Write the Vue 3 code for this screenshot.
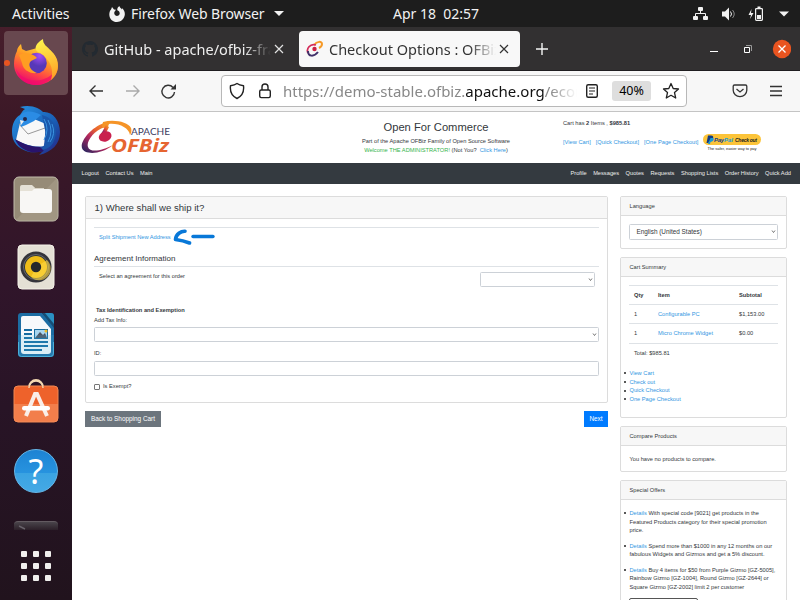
<script setup>
const leftNav = ['Logout', 'Contact Us', 'Main']
const rightNav = ['Profile', 'Messages', 'Quotes', 'Requests', 'Shopping Lists', 'Order History', 'Quick Add']
const cart = [
  { qty: 1, item: 'Configurable PC', sub: '$1,153.00' },
  { qty: 1, item: 'Micro Chrome Widget', sub: '$0.00' },
]
const cartLinks = ['View Cart', 'Check out', 'Quick Checkout', 'One Page Checkout']
const offers = [
  ['With special code [9021] get products in the', 'Featured Products category for their special promotion', 'price.'],
  ['Spend more than $1000 in any 12 months on our', 'fabulous Widgets and Gizmos and get a 5% discount.'],
  ['Buy 4 items for $50 from Purple Gizmo [GZ-5005],', 'Rainbow Gizmo [GZ-1004], Round Gizmo [GZ-2644] or', 'Square Gizmo [GZ-2002] limit 2 per customer'],
]
</script>

<template>
  <div class="screen">
    <header class="topbar">
      <span class="act">Activities</span>
      <svg class="fx" width="16" height="16" viewBox="0 0 16 16"><path fill="#f2f2f2" d="M2.2 3.2 3 1l2 2.4 2 .3-1.3 1.8C5 6.400 5 8 6.200 9.300c1.400 1.200 3.600.7 4.300-1C11.200 6.400 10 4.800 8.300 4.300 8 2.300 9 1 10.400.1c.2 1.700 1.500 2.200 2.600 3.300.1-.4 0-.9-.2-1.300C15.400 4 16.300 7 15.600 9.800 14.700 13.400 11.600 16 8 16 3.600 16 .3 12.600.3 8.400c0-2 .7-3.800 1.900-5.200z"/></svg>
      <span class="app-name">Firefox Web Browser</span>
      <i class="tri"></i>
      <span class="clock">Apr 18&nbsp; 02:57</span>
      <span class="tray">
        <svg width="100" height="18" viewBox="0 0 100 18"><g fill="#f2f2f2"><rect x="5" y="2" width="5" height="4" rx="1"/><rect x="0" y="11" width="5" height="4" rx="1"/><rect x="10" y="11" width="5" height="4" rx="1"/><path d="M29 6.500h3l4-4v13l-4-4h-3z"/><path d="m58.500 4-3 6H58l-1 4 3.500-6H58z"/><path d="M86 6.500h10l-5 5z"/></g><g fill="none" stroke="#f2f2f2"><path d="M7.500 6v3M2.500 11V8.500h10V11" stroke-width="1"/><path d="M37.500 6.500q2 2.500 0 5"/><path d="M39.500 5q3.500 4 0 8" opacity=".5"/><rect x="62.600" y="3.600" width="6.800" height="11.800" rx=".8" stroke-width="1.200"/></g><path fill="#f2f2f2" d="M64 10h4v4h-4zM64.500 1.500h3V3h-3z"/></svg>
      </span>
    </header>

    <div class="desktop">
      <aside class="dock">
        <div class="dock-active">
          <svg width="46" height="48" viewBox="0 0 46 48">
            <defs>
              <linearGradient id="ff" x1=".75" y1="0" x2=".3" y2="1"><stop stop-color="#fff044"/><stop offset=".38" stop-color="#ff9d25"/><stop offset=".7" stop-color="#ff4545"/><stop offset="1" stop-color="#e40079"/></linearGradient>
              <radialGradient id="globe" cx=".65" cy=".15"><stop stop-color="#a64df5"/><stop offset="1" stop-color="#5738b8"/></radialGradient>
              <linearGradient id="tail" x1=".5" y1="0" x2=".7" y2="1"><stop stop-color="#fff24b"/><stop offset="1" stop-color="#ff9d25"/></linearGradient>
            </defs>
            <path fill="url(#ff)" d="M4 13c0-3 2-5 4-7l1 5 4 2 4-1 7-2 13 2c6 5 8 10 8 16 0 11-10 19-22 19S1 38 1 26c0-5 1-9 3-13z"/>
            <path fill="#f40a6c" opacity=".7" d="M3 31c5 10 17 14 28 10 6-2 10-6 13-10-2 9-11 16-21 16C13 47 5 40 3 31z"/>
            <path fill="url(#tail)" d="M30 1c0 6 4 7 8 12 9 9 9 22 0 29 3-10 0-20-11-27-8-3-4-10 3-14z"/>
            <circle cx="23.500" cy="25" r="10.300" fill="url(#globe)"/>
            <path fill="#ff9e22" d="M6 17c5-3 12-2 16 1l2 2-6 3c-4 4 0 10 6 12-7 1-14-3-15-10z"/>
          </svg>
          <i class="running"></i>
        </div>
        <svg class="d-bird" width="50" height="50" viewBox="0 0 50 50">
          <defs><linearGradient id="bird" x1="0" y1="0" x2="1" y2="1"><stop stop-color="#2795e5"/><stop offset=".6" stop-color="#195db4"/><stop offset="1" stop-color="#272080"/></linearGradient></defs>
          <path fill="url(#bird)" d="M14 3 9 1c12-3 20 2 23 5 9-1 17 8 17 20 0 12-8 20-21 23l4-4c-12 4-26-1-30-12C-1 22 3 12 9 9c2-3 3-5 5-6z"/>
          <path fill="#f8f8f8" d="m9 17 14-4 12 5-2 22C23 42 13 38 5 34z"/>
          <path fill="none" stroke="#999" d="m8 18 9 10 17-6"/>
          <path fill="#2b8ce4" d="M8 12c3-8 13-8 22-3l-7 6-8 4-5 2z"/>
          <path fill="#1a57ab" d="M31 9c12 3 18 15 11 28-4 6-8 6-12 7 5-6 6-13 4-20z"/>
          <path stroke="#3b93df" fill="none" d="M33 13q6 10 0 21m4-20q6 11 0 22m4-18q4 10-2 18"/>
          <path fill="#29136c" d="M4 33c8 5 17 8 25 8l4 4c-12 4-25-1-29-12z"/><circle cx="14" cy="13" r="2" fill="#252748"/><path fill="#eee" d="m9 14 1 5 3-4z"/>
        </svg>
        <svg class="d-files" width="46" height="46" viewBox="0 0 46 46">
          <rect x="1" y="1" width="44" height="44" rx="5" fill="#968b77" stroke="#c1bcab"/><path fill="#a99f8b" opacity=".6" d="M44 2v42H3z"/><path fill="#d9d4c7" d="M7 11q0-2 2-2h9l4 3h9v12H7z"/><rect x="7" y="13" width="32" height="24" rx="3" fill="#f8f7f5"/><path fill="#e5e1d6" d="M7 15v-2q0-4 3-4h9l3 3-3 3z"/>
        </svg>
        <svg class="d-music" width="38" height="46" viewBox="0 0 38 46">
          <rect x="1" y="1" width="36" height="44" rx="4" fill="#e4e0d5" stroke="#f5f2e9"/><circle cx="19" cy="23" r="15.500" fill="#34343b"/><circle cx="19" cy="23" r="12.500" fill="#30383b" stroke="#686870"/><circle cx="19" cy="23" r="11" fill="#eebc19"/><path fill="#ffdb45" opacity=".6" d="M19 23 30 16a11 11 0 0 1-16 17z"/><circle cx="19" cy="23" r="5.200" fill="#25282c"/>
        </svg>
        <svg class="d-writer" width="38" height="46" viewBox="0 0 38 46">
          <path fill="#1c6da3" d="M4 1h21l12 13v28q0 3-3 3H4q-3 0-3-3V4q0-3 3-3z"/><path fill="#f7f9fb" d="M6 4h17l11 13v22q0 3-3 3H7q-3 0-3-3V6q0-2 2-2z"/><path fill="#174e75" d="M25 1h9q3 0 3 3v12z"/><path fill="#2b91c3" d="M28 1h6q3 0 3 3v8z"/><path stroke="#146ba1" stroke-width="2" d="M7 18h8M7 22h8M7 26h8M7 30h24M7 34h24M7 38h18"/><path fill="#176b9e" d="M17 17h14v10H17z"/><path fill="#a8d6ef" d="M18 18h12v8H18z"/><path fill="#4b5563" d="m18 26 5-6 3 3 2-2 2 5z"/><circle cx="29" cy="19" r="1.500" fill="#edba22"/><path d="M1 23h36v19q0 3-3 3H4q-3 0-3-3z" fill="#51b6df" opacity=".17"/><path fill="none" stroke="#4bb1da" d="M1.500 30v11q0 3.500 3 3.500h29q3 0 3-3.500V30"/>
        </svg>
        <svg class="d-store" width="46" height="44" viewBox="0 0 46 44">
          <path fill="none" stroke="#f3d8b1" stroke-width="1.800" d="M16 12V8a7 7 0 0 1 14 0v4"/><rect x="1" y="7" width="44" height="36" rx="4" fill="#ee622b" stroke="#f28852"/><path fill="#f58e5c" opacity=".65" d="M1 25h44v14q0 4-4 4H5q-4 0-4-4z"/><path fill="none" stroke="#f9eee8" stroke-width="4" d="m13 37 9-22h2l10 22"/><rect x="9" y="27" width="28" height="4.500" rx="2.200" fill="#fff"/><path fill="none" stroke="#f3d8b1" stroke-width="1.500" d="M16 9a7 7 0 0 1 14 0"/>
        </svg>
        <div class="d-help">?</div>
        <div class="d-term"><svg width="12" height="8"><path d="m1 4 6 3" stroke="#68626a" stroke-width="1.500"/></svg></div>
        <div class="d-grid"><i v-for="n in 9" :key="n"></i></div>
      </aside>

      <main class="window">
        <div class="tabs">
          <div class="tab1">
            <svg width="16" height="16" viewBox="0 0 16 16"><path fill="#232a31" d="M8 0C3.600 0 0 3.600 0 8c0 3.500 2.300 6.500 5.500 7.600.4.100.5-.2.500-.4v-1.400c-2.200.5-2.700-1-2.700-1-.4-.9-.9-1.200-.9-1.200-.7-.5.100-.5.100-.5.800.1 1.200.8 1.200.8.700 1.300 1.900.9 2.300.7.100-.5.300-.9.500-1.100-1.800-.2-3.600-.9-3.600-4 0-.9.300-1.600.8-2.100-.1-.2-.4-1 .1-2.100 0 0 .7-.2 2.200.8a7.500 7.500 0 0 1 4 0c1.500-1 2.200-.8 2.200-.8.500 1.100.2 1.900.1 2.100.5.500.8 1.300.8 2.100 0 3.100-1.900 3.700-3.600 4 .3.200.5.700.5 1.500v2.200c0 .2.100.5.500.4A8 8 0 0 0 8 0z"/></svg>
            <span class="t1">GitHub - apache/ofbiz-fra</span>
            <svg class="x" width="10" height="10"><path d="m1 1 8 8m0-8-8 8" stroke="#e2e2e2" stroke-width="1.200"/></svg>
          </div>
          <div class="tab2">
            <svg width="18" height="18" viewBox="0 0 18 18"><g fill="none"><path stroke="#f69a28" stroke-width="2" d="M8 5c3-4 8-4 8-1 0 1-1 3-3 4"/><path stroke="#d32b59" stroke-width="1.800" d="M10 5C4 3 0 9 2 13"/><path stroke="#41316a" stroke-width="2" d="M2 11c0 6 6 6 10 1"/></g><circle cx="8.500" cy="9" r="2.200" fill="#cc2145"/></svg>
            <span class="t2">Checkout Options : OFBiz</span>
            <svg class="x" width="10" height="10"><path d="m1 1 8 8m0-8-8 8" stroke="#333" stroke-width="1.200"/></svg>
          </div>
          <svg class="plus" width="14" height="14"><path d="M7 1v12M1 7h12" stroke="#f5f5f5" stroke-width="1.400"/></svg>
          <svg class="wc" width="86" height="20" viewBox="0 0 86 20"><path stroke="#fff" d="M5 12.500h8"/><path fill="none" stroke="#fff" d="M39.500 8.500h5v5h-5z"/><path fill="none" stroke="#999" d="M41 6.500h5.500V12"/><circle cx="77" cy="10" r="9.200" fill="#e95420"/><path d="m73.500 6.500 7 7m0-7-7 7" stroke="#fff" stroke-width="1.300"/></svg>
        </div>

        <div class="toolbar">
          <svg width="108" height="18" viewBox="0 0 108 18"><g fill="none" stroke-width="1.400"><path stroke="#333" d="M15 9H2m5.500-5.500L2 9l5.500 5.500"/><path stroke="#aaa" d="M38 9h13m-5.500-5.500L51 9l-5.500 5.500"/><path stroke="#333" d="M86.500 10A6.300 6.300 0 1 1 85 5.500"/></g><path fill="#333" d="M88 2v5.500h-5.500z"/></svg>
          <div class="url">
            <svg width="44" height="18" viewBox="0 0 44 18"><g fill="none" stroke="#222" stroke-width="1.400"><path stroke-linejoin="round" d="M8 1.500C6 3 4 3.400 1.500 3.700.7 10 3 14 8 16.500c5-2.500 7.300-6.500 6.500-12.800C12 3.400 10 3 8 1.500z"/><rect x="30.700" y="8" width="10.600" height="7.600" rx="1.500"/><path d="M33 8V5a3 3 0 0 1 6 0v3"/></g></svg>
            <span class="address">https://demo-stable.ofbiz.<b>apache.org</b>/ecom</span>
            <svg class="reader" width="14" height="16" viewBox="0 0 14 16"><rect x="1.700" y="1.700" width="10.600" height="12.600" rx="1.500" fill="none" stroke="#222" stroke-width="1.400"/><path d="M4 5h6M4 8h6M4 11h4" stroke="#222" stroke-width="1.200"/></svg>
            <span class="zoom">40%</span>
            <svg class="star" width="18" height="18" viewBox="0 0 18 18"><path fill="none" stroke="#222" stroke-width="1.300" stroke-linejoin="round" d="m9 1.500 2.200 5 5.300.5-4 3.600 1.200 5.400L9 13.300 4.300 16l1.200-5.400-4-3.600 5.300-.5z"/></svg>
          </div>
          <svg class="menu-icons" width="52" height="18" viewBox="0 0 52 18"><g fill="none" stroke="#333" stroke-width="1.300"><path d="M2.500 3h11q1.300 0 1.300 1.300v4a6.800 6.300 0 0 1-13.600 0v-4Q1.200 3 2.500 3z"/><path d="m4.500 7 3.500 3 3.500-3"/><path d="M38 4.500h12M38 9h12M38 13.500h12"/></g></svg>
        </div>

        <div class="page">
          <div class="banner">
            <svg class="logo" width="94" height="36" viewBox="0 0 94 36">
              <defs><linearGradient id="lg" x1="1" y1="0" x2=".2" y2="1"><stop stop-color="#f9a526"/><stop offset=".4" stop-color="#e9632f"/><stop offset=".65" stop-color="#b3275e"/><stop offset="1" stop-color="#35255f"/></linearGradient></defs>
              <path fill="url(#lg)" d="M23 3C9 8-1 22 1 28c2 7 19 7 31-3-11 6-23 8-25 2-2-5 5-16 17-20z"/>
              <path fill="#f59427" d="M22 2c11-3 25 0 28 6 1 3 0 5-1 7-1-7-11-12-21-11l-2 5-5-2z"/>
              <path fill="url(#lg)" d="m20 14 5-9 3 2-4 8z"/><ellipse cx="24" cy="16.500" rx="6.500" ry="5" transform="rotate(-20 24 16)" fill="#c9204e"/>
              <text x="50" y="15" font-size="10" textLength="39" lengthAdjust="spacingAndGlyphs" class="logo-a">APACHE</text>
              <text x="30" y="31.500" font-size="18.500" textLength="58" lengthAdjust="spacingAndGlyphs" class="logo-o">OFBiz</text>
            </svg>
            <div class="title">
              <h1>Open For Commerce</h1>
              <p class="l1">Part of the Apache OFBiz Family of Open Source Software</p>
              <p class="l2"><em>Welcome THE ADMINISTRATOR!</em> (Not You?&nbsp; <a>Click Here</a>)</p>
            </div>
            <div class="minicart">
              <p class="mc1">Cart has <b>2</b> Items , <b>$985.81</b></p>
              <div class="mc2"><a>[View Cart]</a><a>[Quick Checkout]</a><a>[One Page Checkout]</a>
                <svg class="pp" width="60" height="20" viewBox="0 0 60 20"><rect x="0" y="1" width="58" height="11" rx="5.500" fill="#fcc439"/><path fill="#143b83" d="M5 2.500h3q3 0 2 3t-4 3L5.500 10h-2z"/><path fill="#179bd7" d="M7.500 5h3q1 3-3 4L7 11H5z"/><text x="11" y="8.800" class="pal" textLength="10">Pay</text><text x="21" y="8.800" class="pal pal2" textLength="9">Pal</text><text x="32" y="8.500" class="cho" textLength="22">Check out</text><text x="4.500" y="16.600" class="safe" textLength="49">The safer, easier way to pay</text></svg>
              </div>
            </div>
          </div>
          <nav class="nav"><div><span v-for="n in leftNav" :key="n">{{ n }}</span></div><div class="nr"><span v-for="n in rightNav" :key="n">{{ n }}</span></div></nav>

          <div class="cols">
            <section class="left">
              <div class="card ship">
                <h2>1) Where shall we ship it?</h2>
                <div class="body">
                  <div class="split"><a>Split Shipment</a> <a>New Address</a>
                    <svg class="arrow" width="43" height="16" viewBox="0 0 43 16"><path fill="none" stroke="#0878d8" stroke-width="3.600" stroke-linecap="round" stroke-linejoin="round" d="M12 2.200C8 2 3 5 2.500 10.500c4 .5 9 1.500 14 3.500"/><path stroke="#0878d8" stroke-width="3.400" stroke-linecap="round" d="M20 7.500h20"/></svg>
                  </div>
                  <h3>Agreement Information</h3>
                  <div class="agree"><span>Select an agreement for this order</span><div class="sel"><svg width="5" height="4"><path d="m1 .5 1.500 2L4 .5" fill="none" stroke="#555" stroke-width=".8"/></svg></div></div>
                  <p class="tax">Tax Identification and Exemption</p>
                  <p class="add">Add Tax Info:</p>
                  <div class="sel"><svg width="5" height="4"><path d="m1 .5 1.500 2L4 .5" fill="none" stroke="#555" stroke-width=".8"/></svg></div>
                  <p class="id">ID:</p>
                  <div class="sel"></div>
                  <div class="exempt"><i></i>Is Exempt?</div>
                </div>
              </div>
              <div class="buttons"><span class="btn back">Back to Shopping Cart</span><span class="btn next">Next</span></div>
            </section>

            <aside class="right">
              <div class="card lang"><h4>Language</h4><div class="sel big"><span>English (United States)</span><svg width="5" height="4"><path d="m1 .5 1.500 2L4 .5" fill="none" stroke="#555" stroke-width=".8"/></svg></div></div>
              <div class="card summary"><h4>Cart Summary</h4>
                <div class="table">
                  <div class="tr th"><span>Qty</span><span>Item</span><span>Subtotal</span></div>
                  <div v-for="c in cart" :key="c.item" class="tr"><span>{{ c.qty }}</span><a>{{ c.item }}</a><span>{{ c.sub }}</span></div>
                  <div class="tr total">Total: $985.81</div>
                </div>
                <ul class="links"><li v-for="l in cartLinks" :key="l"><a>{{ l }}</a></li></ul>
              </div>
              <div class="card compare"><h4>Compare Products</h4><p>You have no products to compare.</p></div>
              <div class="card special"><h4>Special Offers</h4>
                <ul class="offers"><li v-for="(o, i) in offers" :key="i"><div v-for="(l, j) in o" :key="j"><a v-if="j === 0">Details</a> {{ l }}</div></li></ul>
                <div class="more"></div>
              </div>
            </aside>
          </div>
        </div>
      </main>
    </div>
  </div>
</template>

<style>
body { margin: 0; overflow: hidden; }
</style>
<style scoped>
* { box-sizing: border-box; }
p, h1, h2, h3, h4, ul { margin: 0; padding: 0; font-weight: 400; }
svg { display: block; flex: none; }
.screen { width: 800px; height: 600px; overflow: hidden; display: flex; flex-direction: column; font-family: "Noto Sans", sans-serif; background: #fff; }
.topbar { height: 27px; flex: none; background: #1d1d1d; color: #f2f2f2; font-size: 14px; line-height: 27px; display: flex; align-items: center; white-space: nowrap; }
.act { margin-left: 12px; width: 97px; letter-spacing: -.1px; }
.app-name { margin-left: 6px; width: 143px; letter-spacing: -.1px; }
.tri { border: 5px solid transparent; border-top-color: #f2f2f2; border-bottom: 0; }
.clock { margin-left: 109px; width: 300px; }
.tray { width: 100px; }
.desktop { display: flex; flex: 1; min-height: 0; }
.dock { width: 72px; flex: none; background: linear-gradient(180deg, #471e2b 0, #3b1827 100px, #30152a 260px, #281426 380px, #21131d 573px); display: flex; flex-direction: column; align-items: center; }
.dock-active { margin-top: 4px; width: 64px; height: 64px; flex: none; border-radius: 4px; background: #68484f; display: flex; justify-content: center; padding-top: 7px; position: relative; }
.running { position: absolute; left: 0; top: 29px; width: 6px; height: 6px; border-radius: 50%; background: #e95420; }
.d-bird { margin-top: 11px; }
.d-files { margin-top: 20px; }
.d-music { margin-top: 22px; }
.d-writer { margin-top: 22px; }
.d-store { margin-top: 21px; }
.d-help { margin-top: 26px; width: 44px; height: 44px; flex: none; border-radius: 50%; border: 1px solid #65b6e8; background: linear-gradient(#1d83d3 0, #2793df 54%, #3aa3e2 55%, #45a9e5); color: #fff; text-align: center; font-size: 34px; line-height: 43px; }
.d-term { margin-top: 28px; width: 44px; height: 9px; flex: none; background: linear-gradient(#49444a, #2c2029); border-top: 1px solid #635b61; border-radius: 4px 4px 0 0; padding-left: 4px; }
.d-grid { margin-top: 21px; display: grid; grid-template-columns: repeat(3, 6px); grid-auto-rows: 6px; gap: 6px; }
.d-grid i { background: #f0efed; border-radius: 1px; }
.window { flex: 1; min-width: 0; display: flex; flex-direction: column; }
.tabs { height: 44px; flex: none; background: #323031; border-bottom: 1px solid #1f1d20; display: flex; align-items: center; font-size: 14.500px; white-space: nowrap; }
.tab1 { width: 227px; padding-left: 10px; display: flex; align-items: center; color: #eee; }
.t1 { margin-left: 6px; width: 167px; overflow: hidden; -webkit-mask-image: linear-gradient(90deg, #000 84%, transparent); }
.x { margin-left: 3px; }
.tab2 { width: 221px; height: 36px; border-radius: 4px; background: #f8f8f8; display: flex; align-items: center; padding-left: 7px; color: #333; }
.t2 { margin-left: 5px; width: 167px; overflow: hidden; -webkit-mask-image: linear-gradient(90deg, #000 84%, transparent); }
.plus { margin-left: 15px; }
.wc { margin-left: 156px; }
.toolbar { height: 41px; flex: none; background: #f7f7f7; border-bottom: 1px solid #c4c4c4; display: flex; align-items: center; padding-left: 16px; }
.url { margin-left: 25px; width: 466px; height: 32px; background: #fff; border: 1px solid #b8b8b8; border-radius: 4px; display: flex; align-items: center; padding-left: 7px; }
.address { margin-left: 10px; width: 294px; overflow: hidden; white-space: nowrap; font-size: 15px; color: #888; -webkit-mask-image: linear-gradient(90deg, #000 91%, transparent); }
.address b { color: #111; font-weight: 400; }
.reader { margin-left: 8px; }
.zoom { margin-left: 13px; width: 39px; height: 20px; line-height: 20px; background: #dedede; border-radius: 3px; text-align: center; font-size: 12.500px; }
.star { margin-left: 11px; }
.menu-icons { margin-left: 45px; }
.page { flex: 1; min-height: 0; background: #fff; font: 5.700px/8.500px "Liberation Sans", sans-serif; color: #33373b; white-space: nowrap; }
a { color: #3196e2; }
.banner { height: 51px; display: flex; }
.logo { margin: 8px 0 0 9px; }
.logo-a { fill: #40405f; font-family: Lato, sans-serif; }
.logo-o { fill: #e66531; font-family: "Open Sans", sans-serif; font-weight: 700; font-style: italic; }
.title { width: 230px; margin-left: 146px; text-align: center; margin-left: 146px; }
h1 { font-size: 11.200px; line-height: 15px; padding-top: 8px; }
.l1 { margin-top: 2px; }
.l2 em { font-style: normal; color: #35b44c; }
.minicart { margin-left: 12px; }
.mc1 { padding-top: 7px; }
.mc2 { display: flex; margin-top: 4px; line-height: 20px; }
.mc2 a { margin-right: 5px; }
.pp { margin-top: 1px; }
.pal { font-size: 6px; font-weight: 700; font-style: italic; fill: #143b83; }
.pal2 { fill: #179bd7; }
.cho { font-size: 5px; font-weight: 700; font-style: italic; fill: #222; }
.safe { font-size: 4px; fill: #222; }
.nav { height: 21px; background: #343a40; color: #eee; line-height: 21px; padding: 0 9px 0 9.500px; display: flex; justify-content: space-between; }
.nav div { display: flex; gap: 6.500px; }
.cols { display: flex; padding: 12px 13px 0; gap: 12px; }
.left { width: 523px; }
.right { width: 167px; }
.card { border: 1px solid #dcdcdc; border-radius: 2px; }
.ship { height: 207px; }
h2 { height: 22px; line-height: 22px; padding-left: 8.500px; font-size: 9.600px; background: #f7f7f7; border-bottom: 1px solid #dcdcdc; }
.body { padding: 8px 8px 0; }
.split { border-top: 1px solid #dee2e6; height: 19px; line-height: 18px; padding-left: 5px; display: flex; gap: 1.500px; }
.arrow { margin: 1px 0 0 1px; }
h3 { height: 21px; border-bottom: 1px solid #dee2e6; font-size: 8px; line-height: 15px; padding-top: 5px; }
.agree { display: flex; justify-content: space-between; height: 39px; padding: 5px 4px 0 5px; }
.agree .sel { width: 115px; }
.sel { height: 15px; border: 1px solid #ccd1d7; border-radius: 1.500px; display: flex; align-items: center; justify-content: flex-end; padding-right: 1px; }
.tax { padding-left: 2px; font-weight: 700; line-height: 9px; height: 10px; }
.add { line-height: 9px; height: 11px; }
.id { height: 19px; line-height: 22px; }
.exempt { height: 20px; display: flex; align-items: center; gap: 3px; }
.exempt i { width: 6px; height: 6px; border: 1px solid #777; border-radius: 1px; margin-top: 1px; }
.buttons { display: flex; justify-content: space-between; margin-top: 8px; }
.btn { height: 16px; line-height: 16px; font-size: 6.400px; color: #fff; text-align: center; }
.back { width: 76px; background: #6c757d; }
.next { width: 24px; background: #007bff; }
h4 { height: 19px; line-height: 18px; padding-left: 8.500px; font-size: 5.700px; background: #f7f7f7; border-bottom: 1px solid #dcdcdc; }
.lang { height: 53px; }
.big { margin: 8px 8px 0; height: 16px; font-size: 6.400px; justify-content: space-between; padding-left: 6.500px; }
.summary { margin-top: 8px; height: 161px; }
.table { margin: 8px 8px 0; }
.tr { height: 19px; border-top: 1px solid #dee2e6; line-height: 19px; padding-left: 5px; display: grid; grid-template-columns: 24px 81px 1fr; }
.tr:nth-child(3) { height: 20px; }
.th { font-weight: 700; }
.total { display: block; }
.links { margin: 7px 0 0 8.500px; }
li { list-style: none; position: relative; line-height: 8.650px; }
li::before { content: ""; position: absolute; left: -5.500px; top: 3.300px; width: 2px; height: 2px; border-radius: 50%; background: #222; }
.compare { margin-top: 8px; height: 46px; }
.compare p { padding: 9px 0 0 8.500px; }
.special { margin-top: 8px; height: 130px; }
.offers { margin: 9px 0 0 8.500px; }
.offers li { margin-bottom: 7px; line-height: 8.500px; }
.more { margin-left: 8px; width: 69px; height: 16px; border: 1px solid #555; border-radius: 2px; }
</style>
